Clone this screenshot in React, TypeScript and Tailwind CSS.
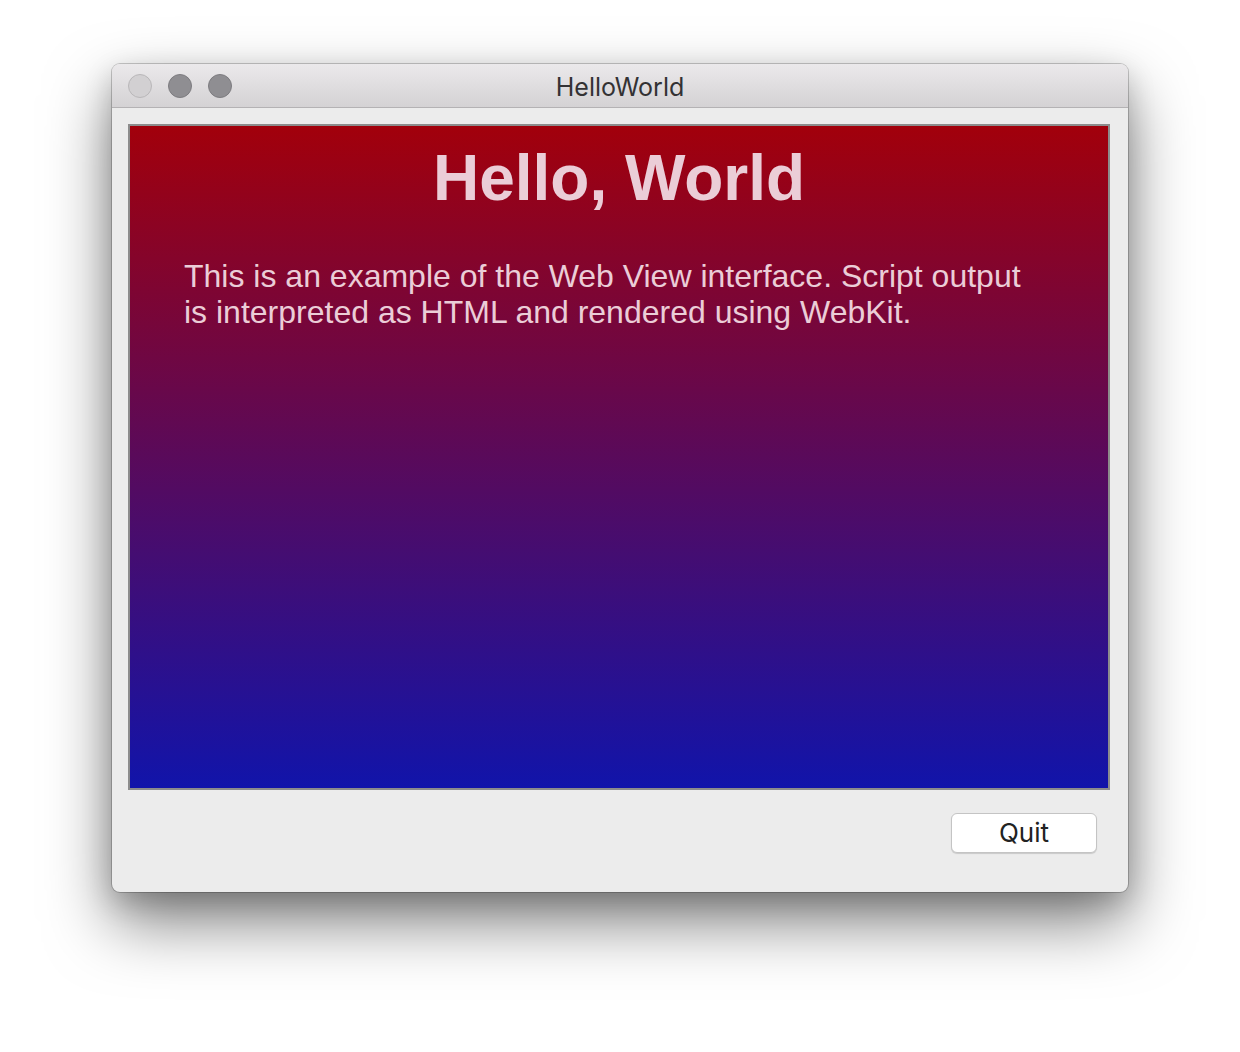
import React from "react";

export default function App() {
  return (
    <div className="w-[1240px] h-[1052px] bg-white pt-[64px] pl-[112px]">
      <div className="w-[1016px] h-[828px] bg-[#ececec] rounded-[8px] flex flex-col overflow-hidden shadow-[0_0_0_1px_rgba(0,0,0,0.2),0_30px_65px_rgba(0,0,0,0.5),0_10px_28px_rgba(0,0,0,0.18)]">
        <div className="relative h-[44px] shrink-0 bg-gradient-to-b from-[#ebe9eb] to-[#d4d2d4] border-b border-[#b4b2b4] flex items-center justify-center">
          <div className="absolute left-[16px] top-[10px] flex gap-[16px]">
            <div className="w-[24px] h-[24px] rounded-full bg-[#d2d0d2] border border-[#b9b7b9]" />
            <div className="w-[24px] h-[24px] rounded-full bg-[#8f8e92] border border-[#7d7c80]" />
            <div className="w-[24px] h-[24px] rounded-full bg-[#8f8e92] border border-[#7d7c80]" />
          </div>
          <span className="text-[25px] text-[#333234] leading-none pt-[3px]" style={{ fontFamily: "Inter, 'Liberation Sans', sans-serif" }}>HelloWorld</span>
        </div>
        <div className="pt-[16px] pl-[16px] pr-[18px]">
          <div
            className="w-[982px] h-[666px] border-2 border-[#8c8c8c] bg-[linear-gradient(to_bottom,#a2000b,#1114aa)] text-[#ebcdd7]"
            style={{ fontFamily: "'Liberation Sans', Arial, sans-serif" }}
          >
            <h1 className="text-center font-bold text-[64px] leading-none pt-[20px]">Hello, World</h1>
            <p className="text-[32px] leading-[36px] pl-[54px] pr-[74px] pt-[48px]">
              This is an example of the Web View interface. Script output is interpreted as HTML and rendered using WebKit.
            </p>
          </div>
        </div>
        <div className="flex justify-end pr-[31px] pt-[23px]">
          <button
            className="w-[146px] h-[40px] bg-white rounded-[6px] border border-[#c4c4c4] shadow-[0_1px_1px_rgba(0,0,0,0.15)] text-[26px] text-[#222] leading-none"
            style={{ fontFamily: "Inter, 'Liberation Sans', sans-serif" }}
          >
            Quit
          </button>
        </div>
      </div>
    </div>
  );
}
